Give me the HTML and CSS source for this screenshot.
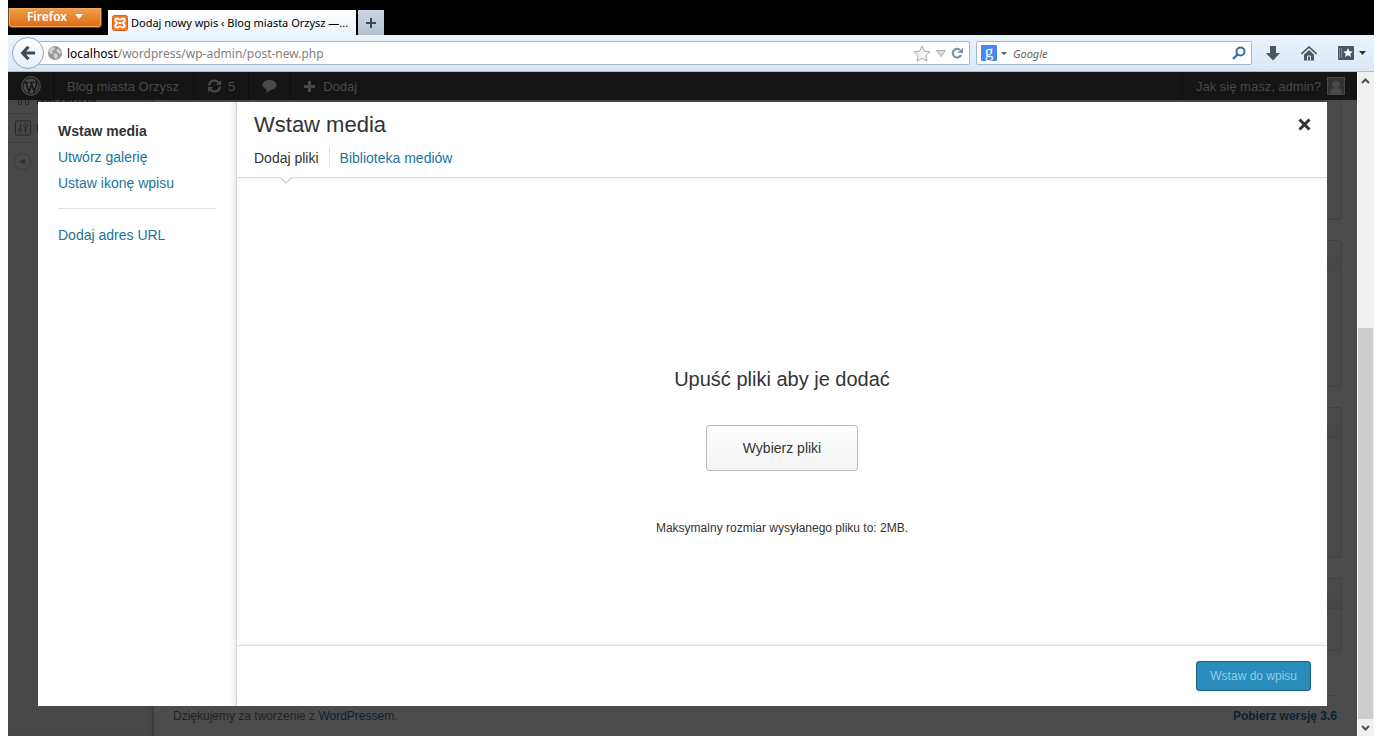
FILE: index.html
```html
<!DOCTYPE html>
<html lang="pl">
<head>
<meta charset="utf-8">
<title>Dodaj nowy wpis ‹ Blog miasta Orzysz</title>
<link rel="stylesheet" href="styles.css">
</head>
<body>
<div class="browser">
  <div class="titlebar">
    <button class="firefox-btn" type="button">Firefox
      <svg width="8" height="5" viewBox="0 0 8 5"><path d="M0 0h8L4 5z" fill="#fff"/></svg>
    </button>
    <div class="tab">
      <svg class="tab-icon" width="16" height="16" viewBox="0 0 16 16"><rect x=".5" y=".5" width="15" height="15" rx="2" fill="#f47a20" stroke="#d9601a"/><path d="M5 3.500c-1.600 0-2 1-1.500 2.200L5 8l-1.500 2.300C3 11.500 3.400 12.500 5 12.500c1.200 0 1.800-1 3-1s1.800 1 3 1c1.600 0 2-1 1.500-2.200L11 8l1.500-2.300C13 4.500 12.600 3.500 11 3.500c-1.200 0-1.800 1-3 1s-1.800-1-3-1z" fill="none" stroke="#fff" stroke-width="2"/><path d="M6.500 8h3" stroke="#fff" stroke-width="2"/></svg>
      <span>Dodaj nowy wpis ‹ Blog miasta Orzysz —...</span>
    </div>
    <button class="newtab" type="button" aria-label="Nowa karta"><svg width="12" height="12" viewBox="0 0 12 12"><path d="M6 1v10M1 6h10" stroke="#3b4754" stroke-width="2"/></svg></button>
  </div>

  <div class="toolbar">
    <button class="back" type="button" aria-label="Wstecz"><svg width="16" height="16" viewBox="0 0 18 18"><path d="M9.500 2L3 9l6.500 7M3 9h14" fill="none" stroke="#3d4a59" stroke-width="3.600"/></svg></button>
    <div class="urlbar">
      <svg width="14" height="14" viewBox="0 0 14 14"><circle cx="7" cy="7" r="7" fill="#9a9a9a"/><path d="M2 3l3-2 2 1-1 2-2 1 1 2-2 1-2-2zM8 4l3-1 2 3-1 2-2-1zM6 7l3 1 1 2-2 3-2-2z" fill="#d6d6d6"/></svg>
      <div class="address"><b>localhost</b>/wordpress/wp-admin/post-new.php</div>
      <svg width="18" height="17" viewBox="0 0 18 17"><path d="M9 1l2.300 5.200 5.700.6-4.200 3.800 1.200 5.600L9 13.300 4 16.200l1.200-5.600L1 6.800l5.700-.6z" fill="#f6f6f6" stroke="#a8a8a8"/></svg>
      <svg width="10" height="7" viewBox="0 0 10 7"><path d="M.5.5h9L5 6.500z" fill="#d7dee6" stroke="#a7b1bb"/></svg>
      <svg width="13" height="12" viewBox="0 0 13 12"><path d="M9 3A4.300 4.300 0 1 0 10 8" fill="none" stroke="#8292a2" stroke-width="2.200"/><path d="M6.500 6H12V.5z" fill="#8292a2"/></svg>
    </div>
    <div class="search">
      <svg width="16" height="16" viewBox="0 0 16 16"><rect width="16" height="16" rx="1" fill="#4687f1"/><text x="8" y="12" text-anchor="middle" class="g-logo">g</text></svg>
      <svg class="drop" width="6" height="3" viewBox="0 0 6 3"><path d="M0 0h6L3 3z" fill="#555"/></svg>
      <input type="text" placeholder="Google" aria-label="Google">
      <svg width="14" height="14" viewBox="0 0 14 14"><circle cx="8.500" cy="5.500" r="4" fill="none" stroke="#2d6faf" stroke-width="2"/><path d="M5.500 8.500L1 13" stroke="#2d6faf" stroke-width="2.400"/></svg>
    </div>
    <div class="tools">
      <svg width="14" height="15" viewBox="0 0 14 15"><path d="M4 0h6v7h4l-7 7.500L0 7h4z" fill="#4a5663"/></svg>
      <svg width="16" height="15" viewBox="0 0 16 15"><path d="M.5 8L8 1l7.500 7" fill="none" stroke="#4a5663" stroke-width="1.600"/><path d="M3 8.700L8 4l5 4.700v5.800H3z" fill="#4a5663"/><path d="M6.500 14.500V10h3v4.500" fill="none" stroke="#dfe9f5"/></svg>
      <span class="bookmarks"><svg width="16" height="14" viewBox="0 0 16 14"><rect width="16" height="14" rx="1" fill="#4a5663"/><path d="M1.500 2v10M3.500 2v10" stroke="#7b8794"/><path d="M10 2l1.400 3.200 3.300.3-2.500 2.200.8 3.400-3-1.800-3 1.800.8-3.400-2.500-2.200 3.300-.3z" fill="#fff"/></svg>
      <svg width="7" height="4" viewBox="0 0 7 4"><path d="M0 0h7L3.500 4z" fill="#333"/></svg></span>
    </div>
  </div>

  <div class="viewport">
    <div class="page">
      <div class="backdrop">
        <nav class="wp-menu">
          <a class="wp-item" href="#"><svg width="16" height="16" viewBox="0 0 16 16"><path d="M3.500 3v10.500h3V3M10.500 3v10.500h3V3" fill="none" stroke="#292929"/></svg>Narzędzia</a>
          <a class="wp-item" href="#"><svg width="16" height="16" viewBox="0 0 16 16"><rect x=".5" y="1" width="15" height="14" rx="1" fill="none" stroke="#292929"/><path d="M5.500 3v6" stroke="#292929"/><circle cx="5" cy="10.500" r="1.500" fill="none" stroke="#292929"/><circle cx="10.500" cy="5.500" r="1.800" fill="none" stroke="#292929"/><path d="M10.500 7v6" stroke="#292929" stroke-width="1.500"/></svg>Ustawienia</a>
          <a class="wp-collapse" href="#" aria-label="Zwiń menu"><svg width="17" height="17" viewBox="0 0 17 17"><circle cx="8.500" cy="8.500" r="8" fill="#494949" stroke="#3a3a3a"/><path d="M5 8.500l6-3v6z" fill="#323232"/></svg></a>
        </nav>
        <main class="wp-body">
          <section class="box box-a"></section>
          <section class="box box-b"><div class="box-head"></div></section>
          <section class="box box-c"><div class="box-head"></div></section>
          <section class="box box-d"><div class="box-head"></div></section>
          <footer class="wp-foot"><span>Dziękujemy za tworzenie z <a href="#">WordPressem</a>.</span><a class="update" href="#">Pobierz wersję 3.6</a></footer>
        </main>
      </div>

      <div class="adminbar">
        <a class="ab-item ab-logo" href="#" aria-label="WordPress"><svg width="20" height="20" viewBox="0 0 20 20"><circle cx="10" cy="10" r="9.200" fill="none" stroke="#484848" stroke-width="1.400"/><circle cx="10" cy="10" r="7.600" fill="#484848"/><path d="M3.500 6.500h4M9 6.500h4.500M4.800 6.500L8 15.500l2.300-6M10 6.500l3.200 9 2.300-7c.5-1.800-.5-2.500-1-3.500" fill="none" stroke="#151515" stroke-width="1.500"/></svg></a>
        <a class="ab-item ab-site" href="#">Blog miasta Orzysz</a>
        <a class="ab-item" href="#"><svg width="15" height="14" viewBox="0 0 15 14"><path d="M2 6.500C2.500 3 5 1.500 7.500 1.500c2 0 3.200.9 4 2M13 7.500c-.5 3.500-3 5-5.500 5-2 0-3.200-.9-4-2" fill="none" stroke="#484848" stroke-width="2.200"/><path d="M14 1v5H9zM1 13V8h5z" fill="#484848"/></svg>5</a>
        <a class="ab-item" href="#" aria-label="Komentarze"><svg width="15" height="14" viewBox="0 0 15 14"><path d="M7.500 1C11.500 1 14.500 3 14.500 6S11.500 10.500 9 10.700L4.500 14v-3.800C2 9.500.5 8 .5 6c0-3 3-5 7-5z" fill="#484848"/></svg></a>
        <a class="ab-item ab-new" href="#"><svg width="11" height="11" viewBox="0 0 11 11"><path d="M5.500 0v11M0 5.500h11" stroke="#484848" stroke-width="3"/></svg>Dodaj</a>
        <a class="ab-item ab-user" href="#">Jak się masz, admin?<svg width="18" height="18" viewBox="0 0 18 18"><rect x=".5" y=".5" width="17" height="17" fill="#333" stroke="#484848"/><circle cx="9" cy="7.500" r="3.700" fill="#4b4b4b"/><path d="M3 17c0-4 2-6 6-6s6 2 6 6z" fill="#4b4b4b"/></svg></a>
      </div>

      <div class="modal" role="dialog" aria-labelledby="modal-title">
        <nav class="media-menu">
          <a class="active" href="#">Wstaw media</a>
          <a href="#">Utwórz galerię</a>
          <a href="#">Ustaw ikonę wpisu</a>
          <hr>
          <a href="#">Dodaj adres URL</a>
        </nav>
        <div class="media-main">
          <header class="media-head">
            <div class="title-row">
              <h1 id="modal-title">Wstaw media</h1>
              <button class="close" type="button" aria-label="Zamknij"><svg width="13" height="13" viewBox="0 0 13 13"><path d="M1.500 1.500l10 10M11.500 1.500l-10 10" stroke="#333" stroke-width="3"/></svg></button>
            </div>
            <div class="router">
              <a class="current" href="#">Dodaj pliki<svg class="notch" width="12" height="7" viewBox="0 0 12 7"><path d="M0 0h12L6 6z" fill="#fff"/><path d="M.5.500L6 6l5.500-5.500" fill="none" stroke="#cfcfcf" stroke-width="1.400"/></svg></a>
              <a href="#">Biblioteka mediów</a>
            </div>
          </header>
          <div class="uploader">
            <h2>Upuść pliki aby je dodać</h2>
            <button class="pick" type="button">Wybierz pliki</button>
            <p>Maksymalny rozmiar wysyłanego pliku to: 2MB.</p>
          </div>
          <footer class="media-foot"><button class="insert" type="button">Wstaw do wpisu</button></footer>
        </div>
      </div>
    </div>
    <div class="scrollbar">
      <svg width="9" height="6" viewBox="0 0 9 6"><path d="M1 5l3.500-3.500L8 5" fill="none" stroke="#505050" stroke-width="2"/></svg>
      <div class="track"><div class="thumb"></div></div>
      <svg width="9" height="6" viewBox="0 0 9 6"><path d="M1 1l3.500 3.500L8 1" fill="none" stroke="#505050" stroke-width="2"/></svg>
    </div>
  </div>
</div>
</body>
</html>
```

FILE: styles.css
```css
* { box-sizing: border-box; }
body {
  margin: 0;
  padding: 0 8px 8px;
  height: 100vh;
  background: #fff;
  font-family: "Liberation Sans", Arial, sans-serif;
  color: #333;
}
svg { display: block; flex: none; }
button { font-family: inherit; cursor: pointer; }
a { text-decoration: none; color: #21759b; }

.browser { height: 100%; display: flex; flex-direction: column; }

/* Window title bar */
.titlebar {
  flex: none;
  display: flex;
  align-items: flex-end;
  height: 35px;
  background: #000;
  font-family: "Noto Sans", "Open Sans", sans-serif;
}
.firefox-btn {
  align-self: flex-start;
  display: flex;
  align-items: center;
  justify-content: center;
  gap: 8px;
  width: 94px;
  height: 20px;
  margin: 8px 6px 0 0;
  padding: 0 0 2px;
  border: 1px solid #6d4a2a;
  border-top: 0;
  border-radius: 0 0 4px 4px;
  background: linear-gradient(#f0a04a, #dc6a14);
  box-shadow: inset 0 0 0 1px #f3a95c;
  color: #fff;
  font-size: 12px;
  font-weight: 600;
  line-height: 16px;
}
.tab {
  display: flex;
  align-items: center;
  gap: 3px;
  width: 248px;
  height: 25px;
  padding-left: 4px;
  background: linear-gradient(#fff, #ebf3fc);
  color: #000;
  font-size: 11px;
  white-space: nowrap;
}
.newtab {
  display: flex;
  align-items: center;
  justify-content: center;
  width: 26px;
  height: 25px;
  margin-left: 2px;
  padding: 0;
  border: 0;
  background: linear-gradient(#cbd7e2, #b3c1cf);
}

/* Navigation toolbar */
.toolbar {
  flex: none;
  display: flex;
  align-items: center;
  height: 37px;
  padding: 0 8px 0 4px;
  border-bottom: 1px solid #a9bfd6;
  background: linear-gradient(#ebf3fc, #d9e7f6);
  font-family: "Noto Sans", "Open Sans", sans-serif;
  font-size: 12px;
}
.back {
  display: flex;
  align-items: center;
  justify-content: center;
  z-index: 1;
  width: 32px;
  height: 32px;
  margin-right: -6px;
  padding: 0;
  border: 1px solid #93a8be;
  border-radius: 50%;
  background: linear-gradient(#fff, #e6eff8);
}
.urlbar, .search {
  display: flex;
  align-items: center;
  height: 24px;
  border: 1px solid #a6b8cb;
  border-radius: 2px;
  background: #fff;
}
.urlbar { flex: 1; gap: 5px; padding: 0 5px 0 9px; }
.address { flex: 1; color: #7f7f7f; font-size: 12px; white-space: nowrap; }
.address b { color: #000; font-weight: 400; }
.search { width: 276px; margin-left: 6px; padding: 0 5px 0 4px; }
.drop { margin: 0 6px 0 4px; }
.search input {
  flex: 1;
  min-width: 0;
  padding: 0;
  border: 0;
  outline: 0;
  background: none;
  font: italic 11px "Noto Sans", "Open Sans", sans-serif;
}
.search input::placeholder { color: #666; opacity: 1; }
.g-logo { font: 400 17px "Liberation Serif", serif; fill: #fff; }
.tools { display: flex; align-items: center; gap: 21px; margin-left: 14px; }
.bookmarks { display: flex; align-items: center; gap: 5px; }

/* Page area */
.viewport { flex: 1; min-height: 0; display: flex; }
.page { position: relative; flex: 1; min-width: 0; overflow: hidden; background: #4c4c4c; }
.scrollbar {
  display: flex;
  flex-direction: column;
  align-items: center;
  width: 17px;
  padding: 6px 1px 5px 0;
  border-left: 1px solid #fff;
  background: #f0f0f0;
}
.track { flex: 1; align-self: stretch; display: flex; align-items: flex-end; margin: 5px 0 6px; }
.thumb { width: 100%; height: 62%; background: #cdcdcd; }

/* Dimmed editor behind the dialog */
.backdrop { display: flex; height: 100%; font-size: 12px; }
.wp-menu {
  width: 146px;
  padding-top: 13px;
  background: #474747;
  box-shadow: inset -6px 0 6px -6px #333;
}
.wp-item {
  display: flex;
  align-items: center;
  gap: 5px;
  height: 29px;
  padding-left: 7px;
  border-bottom: 1px solid #3e3e3e;
  color: #0a232e;
  font-size: 13px;
  font-weight: 700;
}
.wp-collapse { display: flex; align-items: center; height: 36px; padding-left: 6px; }
.wp-body { flex: 1; display: flex; flex-direction: column; gap: 20px; padding: 0 15px 0 19px; }
.box { flex: none; border: 1px solid #414141; border-radius: 3px; background: #494949; }
.box-head { height: 30px; border-bottom: 1px solid #414141; background: linear-gradient(#4b4b4b, #464646); }
.box-a { height: 148px; }
.box-b { height: 147px; }
.box-c { height: 151px; }
.box-d { height: 73px; }
.wp-foot {
  display: flex;
  justify-content: space-between;
  margin: 24px 5px 0 0;
  padding-top: 10px;
  border-top: 1px solid #414141;
  color: #222;
  line-height: 20px;
}
.wp-foot a { color: #0a232e; }
.wp-foot .update { font-weight: 700; }

/* Admin bar */
.adminbar {
  position: absolute;
  inset: 0 0 auto;
  display: flex;
  height: 28px;
  background: #151515;
}
.ab-item {
  display: flex;
  align-items: center;
  gap: 6px;
  padding: 0 13px;
  border-right: 1px solid #0d0d0d;
  color: #484848;
  font-size: 13px;
}
.ab-logo { padding-right: 12px; }
.ab-site { padding-right: 14px; }
.ab-new { gap: 8px; border-right: 0; }
.ab-user { margin-left: auto; padding-right: 12px; border-right: 0; border-left: 1px solid #0d0d0d; }

/* Media dialog */
.modal {
  position: absolute;
  inset: 30px;
  display: grid;
  grid-template-columns: 199px 1fr;
  background: #fff;
}
.media-menu {
  padding: 16px 20px;
  border-right: 1px solid #d5d5d5;
  box-shadow: inset -6px 0 6px -5px #ddd;
  font-size: 14px;
  line-height: 18px;
}
.media-menu a { display: block; padding: 4px 0; white-space: nowrap; }
.media-menu .active { color: #333; font-weight: 700; }
.media-menu hr { margin: 12px 0 13px; border: 0; border-top: 1px solid #dfdfdf; }
.media-main { display: flex; flex-direction: column; min-width: 0; }
.media-head { flex: none; border-bottom: 1px solid #dfdfdf; box-shadow: 0 3px 3px -2px #eee; }
.title-row { display: flex; align-items: center; justify-content: space-between; height: 45px; padding: 0 16px 0 17px; }
h1 { margin: 0; font-size: 22px; font-weight: 400; }
.close { padding: 0; border: 0; background: none; }
.router { display: flex; height: 30px; padding-left: 7px; font-size: 14px; line-height: 22px; }
.router a { position: relative; height: 21px; padding: 0 10px; }
.router .current { color: #333; border-right: 1px solid #dfdfdf; }
.notch { position: absolute; top: 30px; left: 36px; }
.uploader {
  flex: 1;
  display: flex;
  flex-direction: column;
  align-items: center;
  justify-content: center;
  padding-top: 79px;
}
h2 { margin: 0 0 32px; font-size: 20px; font-weight: 400; line-height: 28px; }
.pick {
  height: 46px;
  padding: 0 36px;
  border: 1px solid #bbb;
  border-radius: 3px;
  background: linear-gradient(#fefefe, #f4f4f4);
  color: #333;
  font-size: 14px;
}
.uploader p { margin: 47px 0 0; font-size: 12px; line-height: 20px; }
.media-foot {
  flex: none;
  display: flex;
  align-items: center;
  justify-content: flex-end;
  height: 61px;
  padding: 0 16px;
  border-top: 1px solid #dfdfdf;
  box-shadow: 0 -3px 3px -2px #eee;
}
.insert {
  height: 30px;
  padding: 0 13px;
  border: 1px solid #1b607f;
  border-radius: 3px;
  background: #298cba;
  color: #94cde7;
  font-size: 12px;
}
```
